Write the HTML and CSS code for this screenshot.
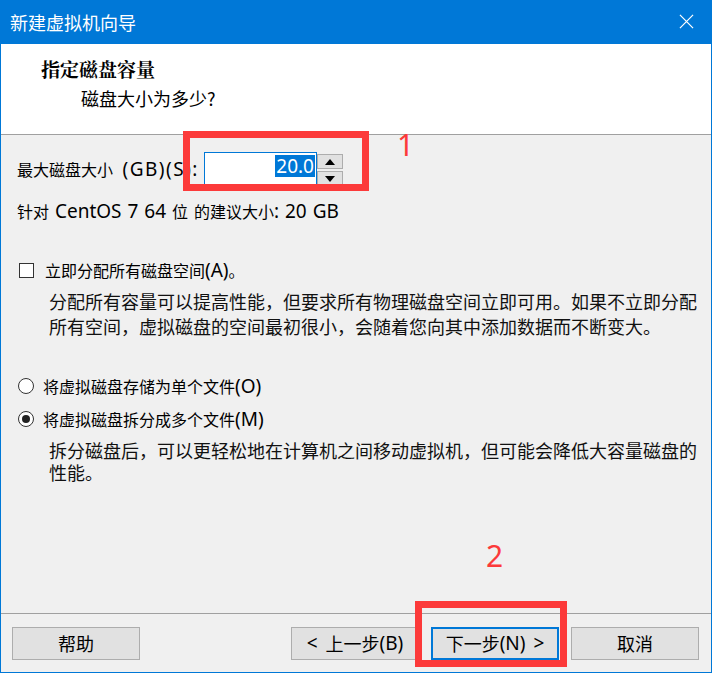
FILE: index.html
```html
<!DOCTYPE html>
<html lang="zh-CN">
<head>
<meta charset="utf-8">
<title>新建虚拟机向导</title>
<link rel="stylesheet" href="styles.css">
</head>
<body>
<div class="window">
  <div class="titlebar">
    <span class="title">新建虚拟机向导</span>
    <svg class="close" width="16" height="16" viewBox="0 0 16 16"><path d="M1 1 L15 15 M15 1 L1 15" stroke="#fff" stroke-width="1.3" fill="none"/></svg>
  </div>
  <div class="header">
    <div class="h-title">指定磁盘容量</div>
    <div class="h-sub">磁盘大小为多少?</div>
  </div>
  <div class="content">
    <div class="size-row">
      <span class="label">最大磁盘大小<span class="l lab"> (GB)(S):</span></span>
      <div class="spin">
        <div class="spin-input"><span class="sel">20.0</span></div>
        <div class="spin-btns">
          <div class="sbtn"><svg width="10" height="6" viewBox="0 0 10 6"><path d="M5 0 L10 6 L0 6 Z" fill="#000"/></svg></div>
          <div class="sbtn"><svg width="10" height="6" viewBox="0 0 10 6"><path d="M0 0 L10 0 L5 6 Z" fill="#000"/></svg></div>
        </div>
      </div>
    </div>
    <div class="recommend">针对<span class="l rec"> CentOS 7 64 </span>位<span class="l rec"> </span>的建议大小<span class="l rec">: 20 GB</span></div>
    <div class="check-row">
      <span class="checkbox"></span>
      <span class="opt">立即分配所有磁盘空间<span class="l">(A)</span>。</span>
    </div>
    <p class="desc">分配所有容量可以提高性能，但要求所有物理磁盘空间立即可用。如果不立即分配<br>所有空间，虚拟磁盘的空间最初很小，会随着您向其中添加数据而不断变大。</p>
    <div class="radio-row first">
      <span class="radio"></span>
      <span class="opt">将虚拟磁盘存储为单个文件<span class="l">(O)</span></span>
    </div>
    <div class="radio-row">
      <span class="radio checked"></span>
      <span class="opt">将虚拟磁盘拆分成多个文件<span class="l">(M)</span></span>
    </div>
    <p class="desc desc2">拆分磁盘后，可以更轻松地在计算机之间移动虚拟机，但可能会降低大容量磁盘的<br>性能。</p>
  </div>
  <div class="footer">
    <div class="btn">帮助</div>
    <div class="spacer"></div>
    <div class="btn"><span class="l">&lt; </span>上一步<span class="l">(B)</span></div>
    <div class="btn default">下一步<span class="l">(N) &gt;</span></div>
    <div class="btn">取消</div>
  </div>
  <div class="mark mark1"></div>
  <div class="num num1">1</div>
  <div class="mark mark2"></div>
  <div class="num num2">2</div>
</div>
</body>
</html>
```
FILE: styles.css
```css
* { box-sizing: border-box; }
html, body { margin: 0; padding: 0; }
body {
  font-family: "Noto Sans CJK SC", "Noto Sans", sans-serif;
  color: #000;
  background: #fff;
}
.l { font-family: "Noto Sans", "Noto Sans CJK SC", sans-serif; font-size: 19px; word-spacing: 3px; }
.lab { letter-spacing: 1.5px; }
.rec { word-spacing: 1px; }
.window {
  position: relative;
  width: 712px;
  height: 673px;
  border: 1px solid #0078d7;
  border-top: none;
  background: #f0f0f0;
  display: flex;
  flex-direction: column;
}
.titlebar {
  height: 44px;
  margin: 0 -1px;
  background: #0078d7;
  color: #fff;
  display: flex;
  align-items: center;
  justify-content: space-between;
  padding: 0 18px 0 10px;
}
.title { font-size: 18px; line-height: 22px; }
.close { width: 15px; height: 15px; margin-top: -2px; }
.header {
  height: 91px;
  background: #fff;
  border-bottom: 1px solid #a0a0a0;
  padding: 12px 0 0 40px;
}
.h-title { font-size: 19px; font-weight: 700; line-height: 26px; font-family: "Noto Serif CJK SC", "Noto Sans CJK SC", serif; }
.h-sub { font-size: 18px; line-height: 26px; padding-left: 40px; margin-top: 3px; }
.content {
  flex: 1;
  padding: 17px 0 0 16px;
  font-size: 16px;
}
.size-row { display: flex; align-items: center; height: 34px; }
.label { width: 187px; font-size: 16px; white-space: nowrap; }
.spin { display: flex; height: 34px; }
.spin-input {
  width: 113px;
  height: 34px;
  background: #fff;
  border: 1px solid #0078d7;
  display: flex;
  justify-content: flex-end;
  padding: 2px 1px 0 0;
}
.sel {
  background: #0078d7;
  color: #fff;
  font-size: 19px;
  line-height: 22px;
  height: 22px;
  padding: 0 1px;
  font-family: "Noto Sans", sans-serif;
}
.spin-btns { display: flex; flex-direction: column; gap: 2px; padding-top: 2px; width: 26px; }
.sbtn {
  height: 16px;
  background: #e1e1e1;
  border: 1px solid #adadad;
  display: flex;
  align-items: center;
  justify-content: center;
}
.recommend { margin-top: 14px; line-height: 22px; height: 22px; font-size: 16px; white-space: nowrap; }
.check-row { display: flex; align-items: center; margin-top: 37px; height: 22px; margin-left: 2px; }
.checkbox { width: 15px; height: 15px; background: #fff; border: 1px solid #333; margin-right: 11px; }
.opt { font-size: 16px; line-height: 22px; }
.desc { margin: 8px 0 0 32px; font-size: 18px; line-height: 25px; color: #111; white-space: nowrap; }
.radio-row { display: flex; align-items: center; height: 22px; margin-top: 11px; margin-left: 1px; }
.radio-row.first { margin-top: 36px; }
.radio {
  width: 16px; height: 16px; border-radius: 50%;
  background: #fff; border: 1px solid #333; margin-right: 9px;
  display: flex; align-items: center; justify-content: center;
}
.radio.checked::after { content: ""; width: 8px; height: 8px; border-radius: 50%; background: #222; }
.desc2 { margin-top: 9px; line-height: 22px; }
.footer {
  height: 59px;
  border-top: 1px solid #a0a0a0;
  display: flex;
  align-items: center;
  padding: 0 12px 0 11px;
  gap: 12px;
}
.spacer { flex: 1; }
.btn {
  width: 128px; height: 33px;
  background: #e1e1e1;
  border: 1px solid #adadad;
  display: flex; align-items: center; justify-content: center;
  font-size: 18px;
  white-space: pre;
}
.btn.default { border: 2px solid #0078d7; }
.mark { position: absolute; border: 7px solid #fc3a3a; }
.mark1 { left: 182px; top: 131px; width: 186px; height: 60px; }
.mark2 { left: 414px; top: 601px; width: 152px; height: 66px; }
.num { position: absolute; color: #fc3a3a; font-family: "Noto Sans", sans-serif; font-size: 30px; line-height: 30px; }
.num1 { left: 396px; top: 130px; }
.num2 { left: 485px; top: 541px; }
```
